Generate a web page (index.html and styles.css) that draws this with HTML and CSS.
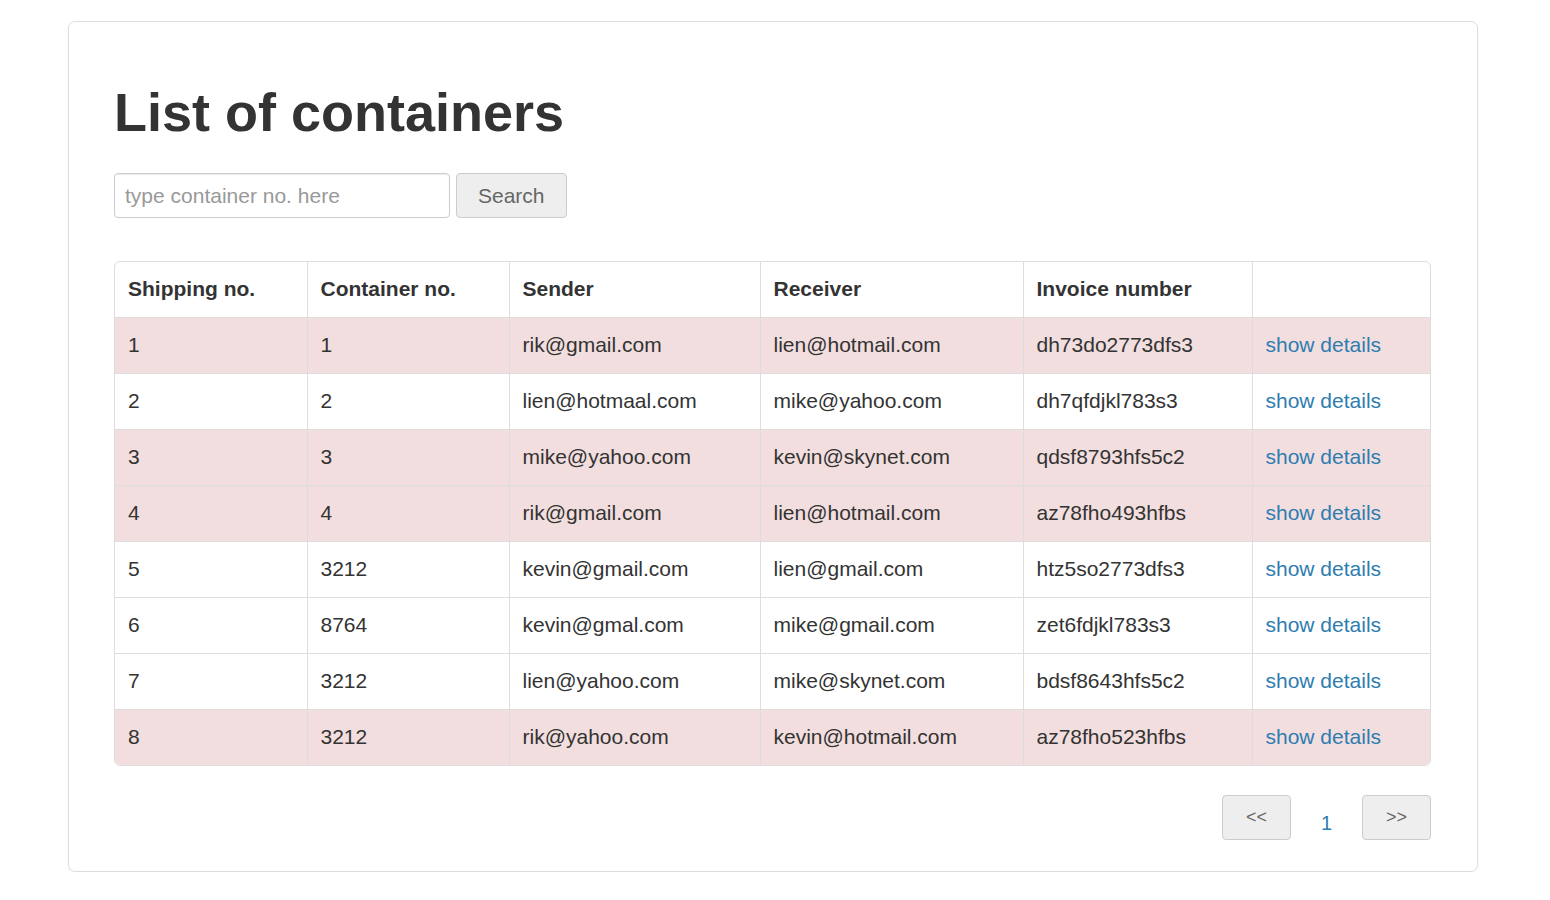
FILE: index.html
```html
<!DOCTYPE html>
<html>
<head>
<meta charset="utf-8">
<link rel="stylesheet" href="styles.css">
</head>
<body>
<div class="card">
  <h1 class="title">List of containers</h1>
  <form class="search">
    <input class="search-input" type="text" placeholder="type container no. here">
    <button class="btn" type="button">Search</button>
  </form>
  <div class="table-wrap">
    <table class="grid">
      <colgroup>
        <col style="width:192px"><col style="width:202px"><col style="width:251px"><col style="width:263px"><col style="width:229px"><col>
      </colgroup>
      <thead>
        <tr><th>Shipping no.</th><th>Container no.</th><th>Sender</th><th>Receiver</th><th>Invoice number</th><th></th></tr>
      </thead>
      <tbody>
        <tr class="danger"><td>1</td><td>1</td><td>rik@gmail.com</td><td>lien@hotmail.com</td><td>dh73do2773dfs3</td><td><a href="#">show details</a></td></tr>
        <tr><td>2</td><td>2</td><td>lien@hotmaal.com</td><td>mike@yahoo.com</td><td>dh7qfdjkl783s3</td><td><a href="#">show details</a></td></tr>
        <tr class="danger"><td>3</td><td>3</td><td>mike@yahoo.com</td><td>kevin@skynet.com</td><td>qdsf8793hfs5c2</td><td><a href="#">show details</a></td></tr>
        <tr class="danger"><td>4</td><td>4</td><td>rik@gmail.com</td><td>lien@hotmail.com</td><td>az78fho493hfbs</td><td><a href="#">show details</a></td></tr>
        <tr><td>5</td><td>3212</td><td>kevin@gmail.com</td><td>lien@gmail.com</td><td>htz5so2773dfs3</td><td><a href="#">show details</a></td></tr>
        <tr><td>6</td><td>8764</td><td>kevin@gmal.com</td><td>mike@gmail.com</td><td>zet6fdjkl783s3</td><td><a href="#">show details</a></td></tr>
        <tr><td>7</td><td>3212</td><td>lien@yahoo.com</td><td>mike@skynet.com</td><td>bdsf8643hfs5c2</td><td><a href="#">show details</a></td></tr>
        <tr class="danger"><td>8</td><td>3212</td><td>rik@yahoo.com</td><td>kevin@hotmail.com</td><td>az78fho523hfbs</td><td><a href="#">show details</a></td></tr>
      </tbody>
    </table>
  </div>
  <div class="pager">
    <button class="btn pager-btn" type="button">&lt;&lt;</button>
    <span class="page-num">1</span>
    <button class="btn pager-btn" type="button">&gt;&gt;</button>
  </div>
</div>
</body>
</html>
```
FILE: styles.css
```css
html, body {
  margin: 0;
  padding: 0;
  background: #fff;
}
body {
  font-family: "Liberation Sans", Arial, sans-serif;
  color: #333;
  padding: 21px 72px 0 68px;
}
.card {
  width: 1410px;
  height: 851px;
  box-sizing: border-box;
  border: 1px solid #ddd;
  border-radius: 7px;
  padding: 0 46px 0 45px;
  box-shadow: 0 1px 2px rgba(0,0,0,0.04);
}
.title {
  margin: 0;
  padding-top: 47px;
  font-size: 54px;
  line-height: 86px;
  font-weight: bold;
  color: #333;
}
.search {
  display: flex;
  gap: 6px;
  margin-top: 18px;
}
.search-input {
  width: 336px;
  height: 45px;
  box-sizing: border-box;
  border: 1px solid #ccc;
  border-radius: 4px;
  padding: 0 10px;
  font-family: inherit;
  font-size: 21px;
  color: #555;
  box-shadow: inset 0 1px 1px rgba(0,0,0,0.075);
}
.search-input::placeholder {
  color: #999;
}
.btn {
  height: 45px;
  box-sizing: border-box;
  border: 1px solid #ccc;
  border-radius: 4px;
  background: #eee;
  font-family: inherit;
  font-size: 21px;
  color: #666;
  padding: 0 21px;
}
.table-wrap {
  margin-top: 43px;
  border: 1px solid #ddd;
  border-radius: 6px;
  overflow: hidden;
}
.grid {
  width: 100%;
  border-collapse: collapse;
  table-layout: fixed;
  font-size: 21px;
}
.grid th, .grid td {
  height: 56px;
  box-sizing: border-box;
  padding: 0 13px;
  text-align: left;
  border-left: 1px solid #ddd;
  border-top: 1px solid #ddd;
  white-space: nowrap;
}
.grid th:first-child, .grid td:first-child {
  border-left: none;
}
.grid thead tr th {
  height: 55px;
  border-top: none;
  font-weight: bold;
  color: #333;
  padding-top: 0;
}
.grid tr.danger td {
  background: #f2dede;
}
.grid td {
  color: #333;
}
.grid a {
  color: #2f7cb0;
  text-decoration: none;
}
.pager {
  display: flex;
  justify-content: flex-end;
  align-items: flex-start;
  margin-top: 29px;
}
.pager-btn {
  width: 69px;
  padding: 0;
  font-size: 18px;
  color: #666;
}
.page-num {
  width: 71px;
  text-align: center;
  color: #2f7cb0;
  font-size: 20px;
  padding-top: 17px;
}
```
